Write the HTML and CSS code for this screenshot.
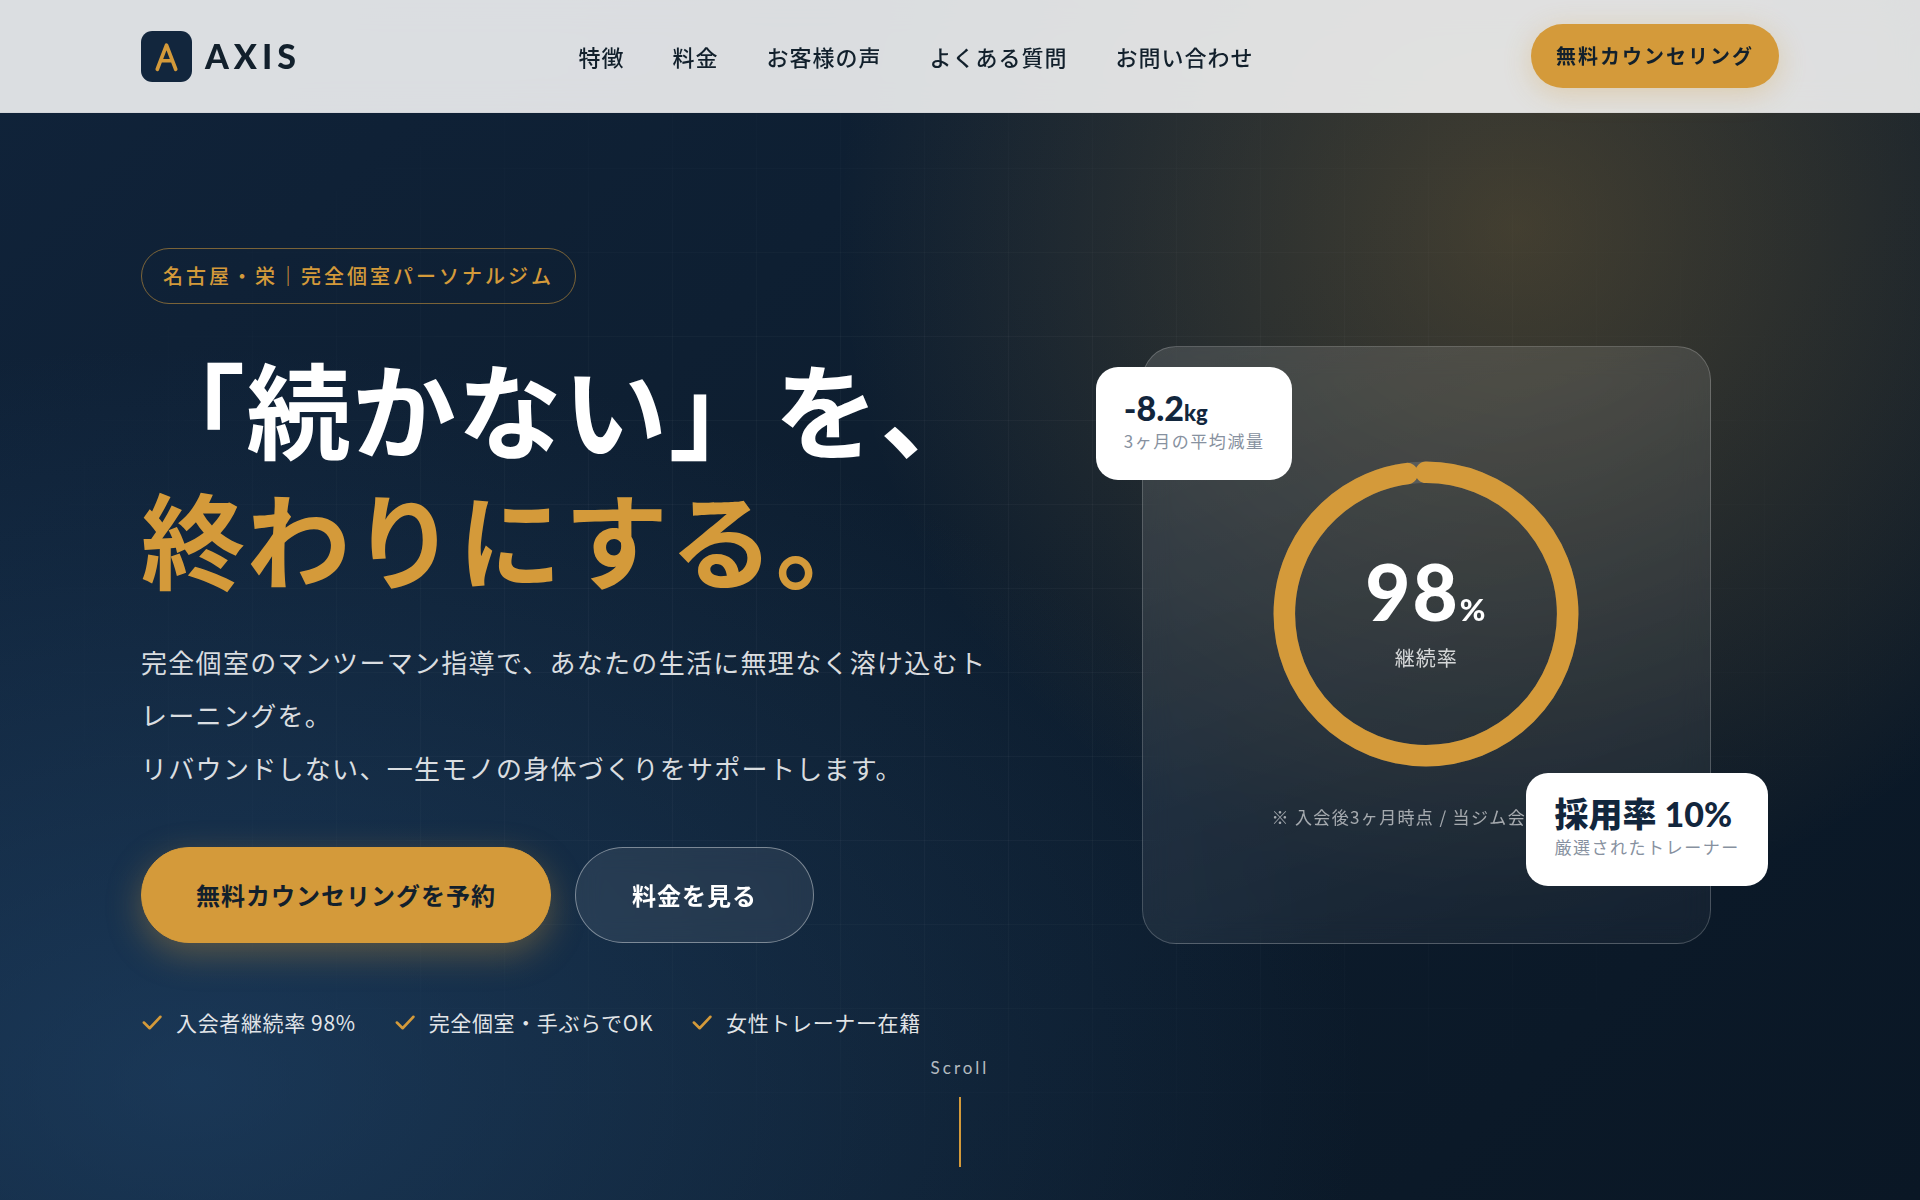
FILE: index.html
```html
<!DOCTYPE html>
<html lang="ja">
  <head>
    <meta charset="UTF-8" />
    <meta name="viewport" content="width=device-width, initial-scale=1.0" />
    <title>AXIS｜名古屋・栄 完全個室パーソナルジム</title>
    <link rel="stylesheet" href="styles.css">
  </head>
  <body>
    <header class="header">
      <div class="container header-inner">
        <a class="logo" href="#top">
          <svg class="logo-mark" viewBox="0 0 36 36" aria-hidden="true">
            <rect width="36" height="36" rx="8" fill="#12263d" />
            <path d="M11.5 27 L18 10 L24.5 27 M14 21 H22" fill="none" stroke="#d49a3a" stroke-width="2.6" stroke-linecap="round" stroke-linejoin="round" />
          </svg>
          <span class="logo-text">AXIS</span>
        </a>

        <nav class="nav">
          <a href="#features">特徴</a>
          <a href="#price">料金</a>
          <a href="#voice">お客様の声</a>
          <a href="#faq">よくある質問</a>
          <a href="#contact">お問い合わせ</a>
        </nav>

        <a class="header-cta" href="#contact">無料カウンセリング</a>
      </div>
    </header>

    <main class="hero" id="top">
      <div class="hero-grid"></div>

      <div class="container hero-inner">
        <div class="hero-content">
          <p class="hero-label">名古屋・栄｜完全個室パーソナルジム</p>
          <h1 class="hero-title">「続かない」を、<br /><span class="accent">終わりにする。</span></h1>
          <p class="hero-lead">完全個室のマンツーマン指導で、あなたの生活に無理なく溶け込むトレーニングを。<br />リバウンドしない、一生モノの身体づくりをサポートします。</p>

          <div class="hero-actions">
            <a class="btn btn-primary" href="#contact">無料カウンセリングを予約</a>
            <a class="btn btn-ghost" href="#price">料金を見る</a>
          </div>

          <ul class="hero-points">
            <li><svg class="check" viewBox="0 0 16 16" aria-hidden="true"><path d="M2 8 L6 12 L13.5 4" /></svg>入会者継続率 98%</li>
            <li><svg class="check" viewBox="0 0 16 16" aria-hidden="true"><path d="M2 8 L6 12 L13.5 4" /></svg>完全個室・手ぶらでOK</li>
            <li><svg class="check" viewBox="0 0 16 16" aria-hidden="true"><path d="M2 8 L6 12 L13.5 4" /></svg>女性トレーナー在籍</li>
          </ul>
        </div>

        <div class="hero-visual">
          <div class="card">
            <div class="ring">
              <svg class="ring-svg" viewBox="0 0 200 200" aria-hidden="true">
                <circle class="ring-track" cx="100" cy="100" r="92" />
                <circle class="ring-value" cx="100" cy="100" r="92" pathLength="100" stroke-dasharray="98 100" transform="rotate(-90 100 100)" />
              </svg>
              <div class="ring-text">
                <div class="ring-num">98<span class="ring-unit">%</span></div>
                <div class="ring-label">継続率</div>
              </div>
            </div>
            <p class="card-note">※ 入会後3ヶ月時点 / 当ジム会員調べ</p>

            <div class="float float-top">
              <div class="float-num">-8.2<span class="float-unit">kg</span></div>
              <div class="float-label">3ヶ月の平均減量</div>
            </div>
            <div class="float float-bottom">
              <div class="float-num">採用率 10%</div>
              <div class="float-label">厳選されたトレーナー</div>
            </div>
          </div>
        </div>
      </div>

      <div class="scroll">
        <span>Scroll</span>
        <span class="scroll-line"></span>
      </div>
    </main>
  </body>
</html>
```
FILE: styles.css
```css
:root {
  --navy: #12263d;
  --ink: #12202c;
  --gold: #d49a3a;
  --font-ja: "Noto Sans CJK JP", sans-serif;
  --font-en: Lato, "Noto Sans CJK JP", sans-serif;
}

* {
  box-sizing: border-box;
  margin: 0;
  padding: 0;
}

body {
  font-family: var(--font-ja);
  color: var(--ink);
  background-color: #0a1624;
}

a {
  color: inherit;
  text-decoration: none;
}

.container {
  width: 100%;
  max-width: 1702px;
  margin: 0 auto;
  padding: 0 32px;
}

/* header */
.header {
  position: fixed;
  top: 0;
  left: 0;
  right: 0;
  z-index: 10;
  border-bottom: 1px solid rgba(18, 38, 61, 0.04);
  background-color: rgba(255, 255, 255, 0.85);
  backdrop-filter: blur(16px);
}

.header-inner {
  display: flex;
  justify-content: space-between;
  align-items: center;
  height: 112px;
}

.logo {
  display: flex;
  align-items: center;
  gap: 13px;
}

.logo-mark {
  width: 51px;
  height: 51px;
}

.logo-text {
  font-family: var(--font-en);
  font-size: 34px;
  font-weight: 900;
  line-height: 40px;
  letter-spacing: 5px;
}

.nav {
  display: flex;
  gap: 48px;
  font-size: 22px;
  font-weight: 500;
  letter-spacing: 1px;
}

.header-cta {
  padding: 15px 25px;
  border-radius: 40px;
  background-color: var(--gold);
  box-shadow: 0 6px 28px rgba(212, 154, 58, 0.3);
  font-size: 20px;
  font-weight: 700;
  line-height: 34px;
  letter-spacing: 2px;
}

/* hero */
.hero {
  position: relative;
  min-height: 100vh;
  padding: 170px 0 80px;
  display: flex;
  align-items: center;
  overflow: hidden;
  color: #fff;
  background:
    radial-gradient(circle 680px at 79% 19%, rgba(212, 154, 58, 0.27), transparent),
    radial-gradient(ellipse at 10% 90%, rgba(36, 76, 118, 0.55), transparent 48%),
    linear-gradient(135deg, #10233a 0%, #0d1d2e 50%, #0a1725 100%);
}

.hero-grid {
  position: absolute;
  inset: 0;
  background-image:
    linear-gradient(rgba(255, 255, 255, 0.03) 1px, transparent 1px),
    linear-gradient(90deg, rgba(255, 255, 255, 0.03) 1px, transparent 1px);
  background-size: 84px 84px;
  mask-image: radial-gradient(ellipse at center, #000 30%, transparent 75%);
}

.hero-inner {
  position: relative;
  display: grid;
  grid-template-columns: 6fr 5fr;
  gap: 86px;
  align-items: center;
}

.hero-label {
  width: fit-content;
  margin-bottom: 38px;
  padding: 9px 21px;
  border: 1px solid rgba(212, 154, 58, 0.55);
  border-radius: 40px;
  color: var(--gold);
  font-size: 20px;
  font-weight: 500;
  line-height: 36px;
  letter-spacing: 3px;
}

.hero-title {
  margin-bottom: 33px;
  font-size: 104px;
  font-weight: 700;
  line-height: 130px;
  letter-spacing: 0.015em;
  white-space: nowrap;
}

.accent {
  color: var(--gold);
}

.hero-lead {
  margin-bottom: 53px;
  color: rgba(255, 255, 255, 0.85);
  font-size: 26px;
  line-height: 53px;
  letter-spacing: 0.05em;
}

.hero-actions {
  display: flex;
  gap: 24px;
  margin-bottom: 59px;
}

.btn {
  padding: 29px 54px;
  border: 1px solid transparent;
  border-radius: 48px;
  font-size: 24px;
  font-weight: 700;
  line-height: 36px;
  letter-spacing: 1px;
}

.btn-primary {
  border-color: var(--gold);
  background-color: var(--gold);
  box-shadow: 0 11px 34px rgba(212, 154, 58, 0.35);
  color: var(--ink);
}

.btn-ghost {
  padding: 29px 56px;
  border-color: rgba(255, 255, 255, 0.4);
  background-color: rgba(255, 255, 255, 0.08);
  backdrop-filter: blur(12px);
}

.hero-points {
  display: flex;
  gap: 38px;
  list-style: none;
  color: rgba(255, 255, 255, 0.88);
  font-size: 21px;
  line-height: 40px;
  letter-spacing: 0.03em;
}

.hero-points li {
  display: flex;
  align-items: center;
  gap: 12px;
}

.check {
  width: 23px;
  height: 23px;
  fill: none;
  stroke: var(--gold);
  stroke-width: 1.8;
  stroke-linecap: round;
  stroke-linejoin: round;
}

/* card */
.hero-visual {
  display: flex;
  justify-content: center;
}

.card {
  position: relative;
  width: 569px;
  height: 598px;
  display: flex;
  flex-direction: column;
  align-items: center;
  justify-content: center;
  border: 1px solid rgba(255, 255, 255, 0.2);
  border-radius: 34px;
  background: linear-gradient(160deg, rgba(255, 255, 255, 0.13), rgba(255, 255, 255, 0.04));
  backdrop-filter: blur(14px);
}

.ring {
  display: grid;
  place-items: center;
}

.ring-svg,
.ring-text {
  grid-area: 1 / 1;
}

.ring-svg {
  width: 308px;
  height: 308px;
  fill: none;
  stroke-width: 14;
}

.ring-track {
  stroke: rgba(255, 255, 255, 0.12);
}

.ring-value {
  stroke: var(--gold);
  stroke-linecap: round;
}

.ring-text {
  padding-bottom: 6px;
  text-align: center;
}

.ring-num {
  font-family: var(--font-en);
  font-size: 78px;
  font-weight: 900;
  line-height: 78px;
  letter-spacing: 2px;
}

.ring-unit {
  font-size: 31px;
  line-height: 1;
}

.ring-label {
  margin-top: 15px;
  color: rgba(255, 255, 255, 0.8);
  font-size: 20px;
  line-height: 26px;
  letter-spacing: 1px;
}

.card-note {
  margin-top: 36px;
  color: rgba(255, 255, 255, 0.6);
  font-size: 17px;
  line-height: 26px;
  letter-spacing: 0.08em;
}

.float {
  position: absolute;
  padding: 20px 28px 26px;
  border-radius: 22px;
  background-color: #fff;
  color: var(--navy);
  white-space: nowrap;
}

.float-top {
  top: 20px;
  left: -47px;
}

.float-bottom {
  right: -58px;
  bottom: 57px;
}

.float-num {
  font-family: var(--font-en);
  font-size: 34px;
  font-weight: 900;
  line-height: 41px;
}

.float-unit {
  font-size: 22px;
  line-height: 1;
}

.float-label {
  color: #8791a0;
  font-size: 17px;
  line-height: 26px;
  letter-spacing: 0.09em;
}

/* scroll */
.scroll {
  position: absolute;
  bottom: 33px;
  left: 0;
  right: 0;
  display: flex;
  flex-direction: column;
  align-items: center;
  gap: 15px;
  color: rgba(255, 255, 255, 0.7);
  font-family: var(--font-en);
  font-size: 17px;
  line-height: 28px;
  letter-spacing: 3px;
}

.scroll-line {
  width: 2px;
  height: 70px;
  background-color: var(--gold);
}
```
